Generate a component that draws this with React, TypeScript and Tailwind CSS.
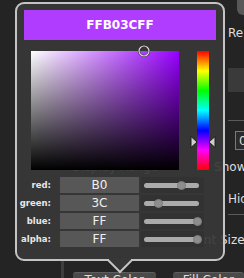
import React from "react";

const rows = [
  { label: "red:", value: "B0", v: 0xb0 / 255 },
  { label: "green:", value: "3C", v: 0x3c / 255 },
  { label: "blue:", value: "FF", v: 1 },
  { label: "alpha:", value: "FF", v: 1 },
];

function Slider({ v }: { v: number }) {
  return (
    <div className="ml-[2px] flex h-[16px] w-[63px] items-center bg-[#323232] pl-[3px] pr-[5px]">
      <div className="relative h-[5px] flex-1 rounded-full bg-[#ababab]">
        <div
          className="absolute top-[-2px] h-[9px] w-[9px] rounded-full border border-[#7c7c7c] bg-[#8e8e8e]"
          style={{ left: `${2 + v * 51 - 4.5}px` }}
        />
      </div>
    </div>
  );
}

export default function App() {
  return (
    <div className="relative h-[278px] w-[244px] overflow-hidden bg-[#242424] font-['DejaVu_Sans',sans-serif] text-[12px] leading-[14px] text-[#dedede]">
      {/* background panel */}
      <div className="flex flex-col">
        <div className="flex h-[15px] shrink-0 justify-end">
          <div className="h-[15px] w-[7px] rounded-bl-[6px] bg-[#585858]" />
        </div>
        <div className="mt-[11px] shrink-0 whitespace-nowrap pl-[228px]">Re</div>
        <div className="ml-[228px] mt-[28px] h-[24px] shrink-0 bg-[#3a3a3a]" />
        <div className="ml-[228px] mt-[28px] h-px shrink-0 bg-[#5a5a5a]" />
        <div className="ml-[235px] mt-[10px] flex h-[19px] w-[20px] shrink-0 items-center border border-[#7a7a7a] bg-[#2c2c2c] pl-[3px]">
          0
        </div>
        <div className="mt-[10px] flex shrink-0 whitespace-nowrap">
          <span className="ml-[72px]">Display Range</span>
          <span className="ml-[56px]">Show</span>
        </div>
        <div className="mt-[18px] shrink-0 whitespace-nowrap pl-[228px]">Hid</div>
        <div className="ml-[228px] mt-[8px] h-px shrink-0 bg-[#5a5a5a]" />
        <div className="mt-[18px] shrink-0 whitespace-nowrap pl-[190px]">Font Size</div>
        <div className="mt-[13px] flex h-[31px] shrink-0">
          <div className="ml-[61px] w-[3px] bg-[#3e3e3e]" />
          <div className="ml-[9px] mt-[12px] flex h-[20px] w-[93px] justify-center whitespace-nowrap rounded-t-[3px] border-t border-[#5e5e5e] bg-[#4a4a4a]">
            Text Color
          </div>
          <div className="ml-[17px] mt-[12px] flex h-[20px] w-[80px] justify-center whitespace-nowrap rounded-t-[3px] border-t border-[#5e5e5e] bg-[#4a4a4a]">
            Fill Color
          </div>
        </div>
      </div>

      {/* popup */}
      <div className="absolute left-[15px] top-[2px] h-[259px] w-[210px] rounded-[9px] border-2 border-[#c4c4c4] bg-[#383838]/[0.93] pt-[6px]">
        <div className="mx-[7px] h-[30px] bg-[#b03cff] text-center text-[12px] font-bold leading-[30px] text-white">
          FFB03CFF
        </div>
        <div className="ml-[14px] mt-[11px] flex h-[119px] gap-[18px]">
          <div className="relative w-[148px] bg-[#9800ff]">
            <div className="h-full w-full bg-linear-to-r from-white to-transparent">
              <div className="h-full w-full bg-linear-to-b from-transparent to-black" />
            </div>
            <svg className="absolute left-[107px] top-[-6px]" width="12" height="12" viewBox="0 0 12 12">
              <circle cx="6" cy="6" r="5" fill="none" stroke="#2a2a2a" strokeWidth="2.2" />
              <circle cx="6" cy="6" r="5" fill="none" stroke="#dcdcdc" strokeWidth="1.2" />
            </svg>
          </div>
          <div className="relative w-[12px] bg-[linear-gradient(to_bottom,#f00,#ff0,#0f0,#0ff,#00f,#f0f,#f00)]">
            <svg className="absolute left-[-7px] top-[85px]" width="26" height="12" viewBox="0 0 26 12">
              <polygon points="1,0.5 7,6 1,11.5" fill="#cfcfcf" stroke="#1c1c1c" strokeWidth="1" />
              <polygon points="25,0.5 19,6 25,11.5" fill="#cfcfcf" stroke="#1c1c1c" strokeWidth="1" />
            </svg>
          </div>
        </div>
        <div className="mt-[7px] flex flex-col gap-[2px]">
          {rows.map((r) => (
            <div key={r.label} className="flex h-[16px] items-center">
              <div className="w-[34px] text-right text-[8.5px] font-bold leading-[16px] text-[#e6e6e6]">
                {r.label}
              </div>
              <div className="ml-[9px] h-[16px] w-[79px] bg-[#575757] text-center text-[12px] leading-[16px] text-[#f0f0f0]">
                {r.value}
              </div>
              <Slider v={r.v} />
            </div>
          ))}
        </div>
        <svg className="absolute left-[89px] top-[253px]" width="28" height="18" viewBox="0 0 28 18">
          <rect x="3" y="1" width="22" height="4" fill="#373737" />
          <path d="M0 3 L2 3 L14 15 L26 3 L28 3" fill="#373737" stroke="#c4c4c4" strokeWidth="2" />
        </svg>
      </div>
    </div>
  );
}
